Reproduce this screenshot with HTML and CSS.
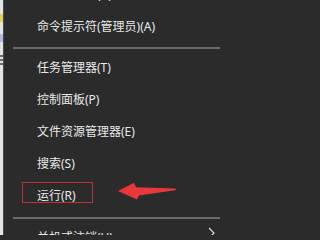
FILE: index.html
```html
<!DOCTYPE html>
<html lang="zh-CN">
<head>
<meta charset="utf-8">
<link rel="stylesheet" href="styles.css">
</head>
<body>
<div class="screen">
  <div class="desk-strip"></div>
  <div class="menu">
    <div class="item">命令提示符(A)</div>
    <div class="item">命令提示符(管理员)(A)</div>
    <div class="sep"></div>
    <div class="item">任务管理器(T)</div>
    <div class="item">控制面板(P)</div>
    <div class="item">文件资源管理器(E)</div>
    <div class="item">搜索(S)</div>
    <div class="item item-marked"><span class="mark-box">运行(R)</span></div>
    <div class="sep sep-low"></div>
    <div class="item item-sub"><span>关机或注销(U)</span>
      <svg class="chev" width="7" height="12" viewBox="0 0 7 12"><path d="M1 1 L6 6 L1 11" fill="none" stroke="#d8d8d8" stroke-width="1.2"/></svg>
    </div>
  </div>
  <svg class="pointer" width="66" height="22" viewBox="0 0 66 22">
    <polygon points="3,11 19,2.7 21,7.2 60,8.4 61.5,9.2 60,10.2 24,15.5 22,19.5" fill="#e8383c"/>
  </svg>
</div>
</body>
</html>
```
FILE: styles.css
```css
html, body {
  margin: 0;
  padding: 0;
  background: #2b2b2b;
}
.screen {
  position: relative;
  width: 225px;
  height: 235px;
  overflow: hidden;
  display: flex;
  background: #2b2b2b;
  font-family: "Noto Sans", "Noto Sans CJK SC", sans-serif;
  font-size: 12px;
  color: #e8e8e8;
}
.desk-strip {
  flex: 0 0 3px;
  border-right: 1px solid #4a4a4a;
  background: linear-gradient(to bottom,
    #e4e4e4 0 14px, #e6cf55 14px 22px, #e4e4e4 22px 34px,
    #aebbd8 34px 42px, #e4e4e4 42px 55px, #6c6c6c 55px 57px,
    #e4e4e4 57px 59px, #6c6c6c 59px 61px, #e4e4e4 61px 63px,
    #6c6c6c 63px 65px, #e4e4e4 65px);
}
.menu {
  flex: 1;
  margin-top: -21px;
}
.item {
  height: 32px;
  display: flex;
  align-items: center;
  padding-left: 33px;
  line-height: 12px;
  white-space: nowrap;
}
.sep {
  height: 2px;
  background: #6a6a6a;
  margin: 4px 5px 3px 9px;
}
.sep-low {
  margin-top: 5px;
  margin-bottom: 3px;
}
.item-marked {
  padding-left: 18px;
  align-items: flex-start;
  padding-top: 2px;
  height: 30px;
}
.mark-box {
  display: block;
  box-sizing: border-box;
  width: 71px;
  height: 21px;
  border: 1px solid #b8343a;
  padding: 7px 0 0 14px;
  line-height: 12px;
}
.item-sub {
  justify-content: space-between;
  padding-right: 10px;
}
.chev {
  display: block;
  margin-top: -10px;
}
.pointer {
  position: absolute;
  left: 115px;
  top: 180px;
}
```
